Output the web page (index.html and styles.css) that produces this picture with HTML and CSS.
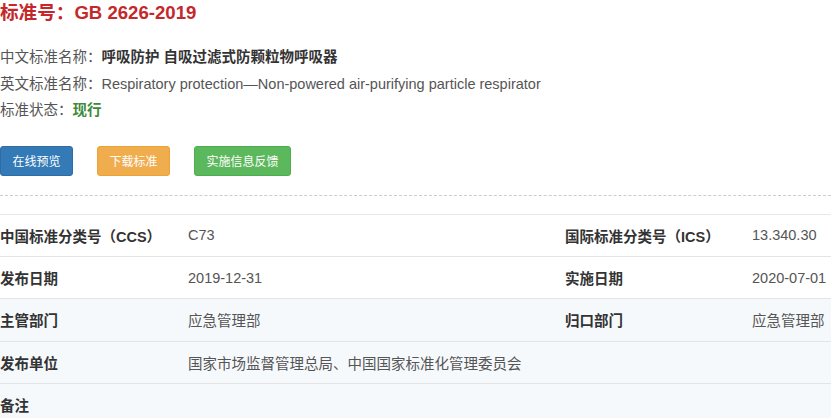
FILE: index.html
```html
<!DOCTYPE html>
<html lang="zh-CN">
<head>
<meta charset="utf-8">
<title>GB 2626-2019</title>
<link rel="stylesheet" href="styles.css">
</head>
<body>
<div class="page">
  <h1 class="title">标准号：GB 2626-2019</h1>
  <div class="info">
    <p class="line">中文标准名称：<strong class="cn-name">呼吸防护 自吸过滤式防颗粒物呼吸器</strong></p>
    <p class="line">英文标准名称：Respiratory protection—Non-powered air-purifying particle respirator</p>
    <p class="line">标准状态：<strong class="status">现行</strong></p>
  </div>
  <div class="actions">
    <a class="btn btn-blue">在线预览</a>
    <a class="btn btn-orange">下载标准</a>
    <a class="btn btn-green">实施信息反馈</a>
  </div>
  <div class="divider"></div>
  <div class="table">
    <div class="row">
      <div class="cell label">中国标准分类号（CCS）</div>
      <div class="cell value">C73</div>
      <div class="cell label">国际标准分类号（ICS）</div>
      <div class="cell value">13.340.30</div>
    </div>
    <div class="row">
      <div class="cell label">发布日期</div>
      <div class="cell value">2019-12-31</div>
      <div class="cell label">实施日期</div>
      <div class="cell value">2020-07-01</div>
    </div>
    <div class="row tinted">
      <div class="cell label">主管部门</div>
      <div class="cell value">应急管理部</div>
      <div class="cell label">归口部门</div>
      <div class="cell value">应急管理部</div>
    </div>
    <div class="row tinted">
      <div class="cell label">发布单位</div>
      <div class="cell value wide">国家市场监督管理总局、中国国家标准化管理委员会</div>
    </div>
    <div class="row tinted">
      <div class="cell label">备注</div>
      <div class="cell value wide"></div>
    </div>
  </div>
</div>
</body>
</html>
```

FILE: styles.css
```css
html, body {
  margin: 0;
  padding: 0;
  background: #ffffff;
}

body {
  font-family: "Liberation Sans", Arial, "Noto Sans CJK SC", sans-serif;
  font-size: 14.5px;
  color: #333333;
}

.page {
  width: 831px;
  overflow: hidden;
}

.title {
  margin: 0;
  font-size: 18.6px;
  line-height: 25px;
  font-weight: bold;
  color: #c4282b;
}

.info {
  margin-top: 19px;
}

.line {
  margin: 0;
  line-height: 26.5px;
  color: #555555;
}

.cn-name {
  color: #333333;
  font-weight: bold;
}

.status {
  color: #3c8a3a;
  font-weight: bold;
}

.actions {
  display: flex;
  gap: 24px;
  margin-top: 22px;
}

.btn {
  display: inline-flex;
  align-items: center;
  height: 30px;
  padding: 0 11.5px;
  box-sizing: border-box;
  border-radius: 3px;
  font-size: 12px;
  color: #ffffff;
  text-decoration: none;
}

.btn-blue {
  background: #337ab7;
  border: 1px solid #2e6da4;
}

.btn-orange {
  background: #f0ad4e;
  border: 1px solid #eea236;
}

.btn-green {
  background: #5cb85c;
  border: 1px solid #4cae4c;
}

.divider {
  margin-top: 19px;
  border-top: 1px dashed #cccccc;
}

.table {
  margin-top: 18px;
  border-top: 1px solid #e8e8e8;
}

.row {
  display: grid;
  grid-template-columns: 188px 377px 187px 1fr;
  align-items: center;
  height: 42.4px;
  border-bottom: 1px solid #e4e4e4;
  box-sizing: border-box;
}

.row.tinted {
  background: #f6f9fc;
}

.cell {
  white-space: nowrap;
}

.label {
  font-weight: bold;
  color: #333333;
}

.value {
  color: #555555;
}

.value.wide {
  grid-column: 2 / 5;
}
```
